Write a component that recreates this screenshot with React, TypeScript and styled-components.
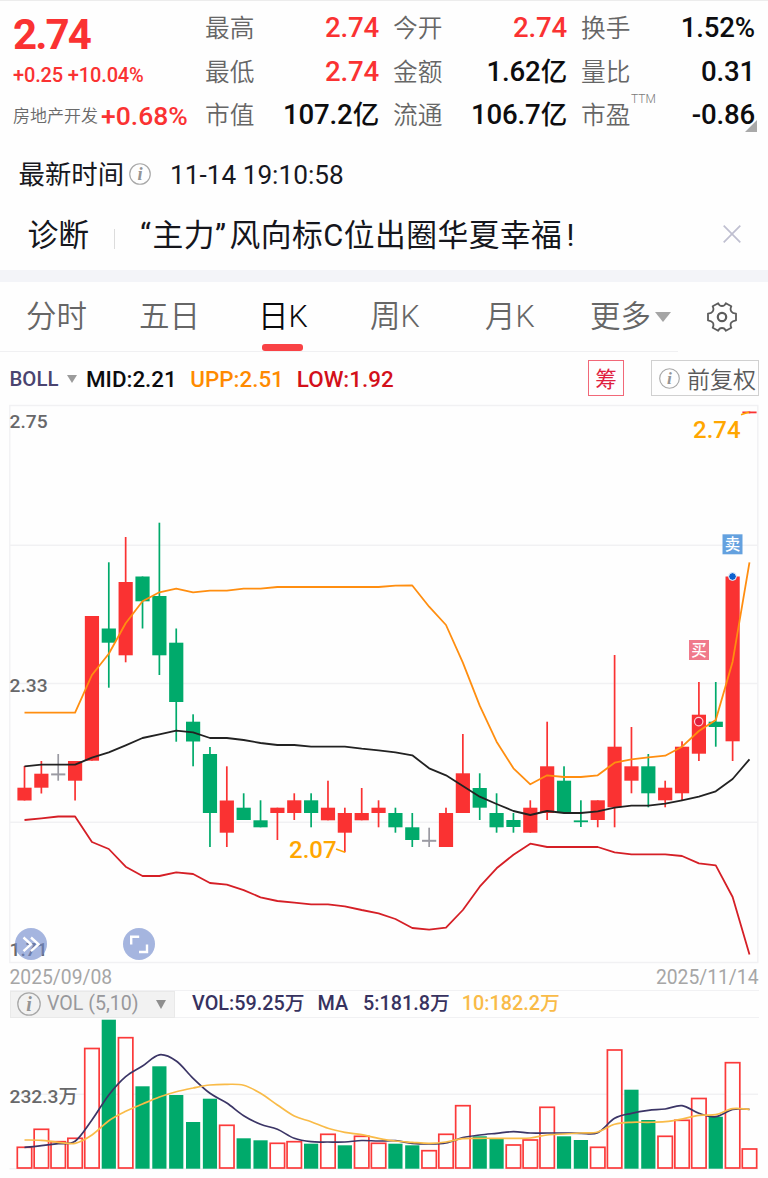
import React from "react";
import styled, { createGlobalStyle } from "styled-components";

const GlobalStyle = createGlobalStyle`
  * { box-sizing: border-box; }
  body {
    margin: 0;
    background: #fefefe;
    font-family: Roboto, "Noto Sans CJK SC", sans-serif;
    color: #17181c;
  }
`;

const RED = "#fa3232";
const GREEN = "#00aa6b";

const Page = styled.main`
  width: 768px;
  height: 1178px;
  overflow: hidden;
  display: flex;
  flex-direction: column;
  border-top: 1px solid #ececec;
`;

/* ---------- quote summary ---------- */

const Summary = styled.header`
  position: relative;
  height: 149px;
  padding: 5px 13px 0;
  display: grid;
  grid-template-columns: 178px 174px 174px 174px;
  column-gap: 14px;
`;

const PriceColumn = styled.div`
  display: flex;
  flex-direction: column;
  color: ${RED};
  white-space: nowrap;
`;

const LastPrice = styled.div`
  height: 56px;
  line-height: 57px;
  font-size: 42px;
  font-weight: 700;
  letter-spacing: -1.9px;
`;

const Change = styled.div`
  height: 26px;
  line-height: 26px;
  font-size: 20px;
  font-weight: 500;
  letter-spacing: -0.15px;
`;

const Sector = styled.div`
  height: 56px;
  display: flex;
  align-items: center;
  gap: 3px;
  line-height: 56px;
`;

const SectorName = styled.span`
  font-size: 17px;
  color: #6a6a6a;
  font-weight: 350;
`;

const SectorChange = styled.span`
  font-size: 26.5px;
  font-weight: 500;
`;

const MetricColumn = styled.dl`
  margin: 0;
  display: grid;
  grid-template-rows: 43px 44px 42px;
`;

const Metric = styled.div`
  display: flex;
  justify-content: space-between;
  align-items: center;
`;

const MetricName = styled.dt`
  position: relative;
  padding-top: 3px;
  font-size: 24.7px;
  line-height: 40px;
  font-weight: 350;
  color: #666;
`;

const Sup = styled.sup`
  position: absolute;
  left: 50px;
  top: -14px;
  font-size: 12px;
  line-height: 40px;
  color: #7a7a7a;
`;

const MetricValue = styled.dd<{ $up?: boolean }>`
  margin: 0;
  padding-top: 1px;
  font-size: 27.6px;
  line-height: 40px;
  font-weight: 500;
  white-space: nowrap;
  letter-spacing: -0.15px;
  color: ${(p) => (p.$up ? RED : "#0d0d0f")};
`;

const Unit = styled.span`
  font-size: 26.5px;
`;

const Corner = styled.i`
  position: absolute;
  left: 745px;
  top: 119px;
  border-bottom: 12px solid #a9a9a9;
  border-left: 12px solid transparent;
`;

const TimeRow = styled.div`
  height: 50px;
  padding-left: 18.5px;
  display: flex;
  align-items: center;
  font-size: 26.4px;
  line-height: 50px;
  color: #17181f;
`;

const InfoIcon = styled.svg<{ $size: number }>`
  width: ${(p) => p.$size}px;
  height: ${(p) => p.$size}px;
  flex: none;
  overflow: visible;
  text {
    font: italic 700 20px "Liberation Serif", serif;
  }
`;

const TimeInfo = styled.span`
  display: flex;
  margin: -3px 19px 0 5px;
`;

const TimeValue = styled.span`
  font-size: 26.2px;
`;

/* ---------- diagnosis strip ---------- */

const Diagnosis = styled.section`
  height: 70px;
  padding: 0 27px 0 27.5px;
  display: flex;
  align-items: center;
  font-size: 30.8px;
  line-height: 71px;
  color: #15161c;
`;

const Divider = styled.i`
  width: 1px;
  height: 20px;
  margin: 8px 25px 0 25px;
  background: #dcdcdc;
`;

const Headline = styled.span`
  flex: 1;
  white-space: nowrap;
  letter-spacing: 0.45px;
`;

const Emphasis = styled.q`
  quotes: "“" "”";
  margin-right: 3px;
  &::before {
    margin-right: 1px;
  }
`;

const Exclaim = styled.span`
  margin-left: 4px;
`;

const CloseIcon = styled.svg`
  width: 18px;
  height: 18px;
  margin-top: -3px;
`;

const Band = styled.div`
  height: 12px;
  background: #f3f4f8;
`;

/* ---------- period tabs ---------- */

const Tabs = styled.nav`
  height: 69px;
  padding-left: 26px;
  display: grid;
  grid-template-columns: 113px 119px 112px 115px 105px 117px 1fr;
  align-items: stretch;
`;

const Tab = styled.div<{ $active?: boolean }>`
  position: relative;
  display: flex;
  align-items: center;
  gap: 4px;
  font-size: 30.5px;
  line-height: 67px;
  font-weight: 350;
  color: ${(p) => (p.$active ? "#08090c" : "#666")};
  ${(p) =>
    p.$active &&
    `&::after {
      content: "";
      position: absolute;
      left: 4px;
      bottom: 0;
      width: 41px;
      height: 7px;
      border-radius: 3px;
      background: #f94245;
    }`}
`;

const Caret = styled.i<{ $w: number; $h: number; $c?: string }>`
  border-top: ${(p) => p.$h}px solid ${(p) => p.$c || "#a5a5a5"};
  border-left: ${(p) => p.$w / 2}px solid transparent;
  border-right: ${(p) => p.$w / 2}px solid transparent;
`;

const GearIcon = styled.svg`
  width: 30px;
  height: 30px;
`;

/* ---------- indicator row ---------- */

const Indicators = styled.div`
  height: 54px;
  padding: 1px 9px 0 9.5px;
  display: flex;
  align-items: center;
  font-size: 22.4px;
  line-height: 54px;
  font-weight: 500;
  background: linear-gradient(#f0f0f2, #f0f0f2) 0 0 / 678px 1px no-repeat;
`;

const Boll = styled.span`
  font-size: 20.4px;
  font-weight: 500;
  color: #4a4470;
  margin-right: 8.5px;
`;

const Reading = styled.span<{ $c: string; $ml: number }>`
  color: ${(p) => p.$c};
  margin-left: ${(p) => p.$ml}px;
`;

const ChipButton = styled.button`
  width: 36px;
  height: 36px;
  margin: -1px 0 0 auto;
  padding: 0;
  border: 1px solid #f16878;
  background: transparent;
  color: #e0213f;
  font: 400 21.5px/34px "Noto Sans CJK SC", sans-serif;
`;

const AdjustButton = styled.button`
  width: 108px;
  height: 36px;
  margin: -1px 0 0 27px;
  padding: 0 0 0 7px;
  display: flex;
  align-items: center;
  gap: 7px;
  border: 1px solid #d0d0d0;
  background: transparent;
  color: #5a5a5a;
  white-space: nowrap;
  font: 350 23px/34px "Noto Sans CJK SC", sans-serif;
`;

/* ---------- charts ---------- */

const PriceChart = styled.section`
  position: relative;
  height: 558px;
`;

const Plot = styled.svg`
  display: block;
  width: 768px;
  height: 100%;
  overflow: visible;
`;

const Axis = styled.text`
  font-size: 19.2px;
  font-weight: 500;
  fill: #68686a;
`;

const Callout = styled.text`
  font-size: 24px;
  font-weight: 500;
  fill: #ffa600;
`;

const Marker = styled.text`
  font: 500 15.5px "Noto Sans CJK SC", sans-serif;
  fill: #fff;
  text-anchor: middle;
`;

const RoundButton = styled.button<{ $x: number }>`
  position: absolute;
  left: ${(p) => p.$x}px;
  top: 523px;
  width: 32px;
  height: 32px;
  padding: 0;
  border: 0;
  border-radius: 50%;
  background: rgba(110, 136, 204, 0.62);
  svg {
    display: block;
    width: 32px;
    height: 32px;
  }
`;

const Dates = styled.div`
  height: 27px;
  padding: 1px 9.5px 0;
  display: flex;
  justify-content: space-between;
  font-size: 19.3px;
  line-height: 27px;
  color: #a6a6a6;
`;

const VolumeBar = styled.div`
  height: 28px;
  margin: 0 9.5px;
  display: flex;
  align-items: center;
  border-top: 1px solid #f1f1f3;
  border-bottom: 1px solid #f1f1f3;
  font-size: 19.8px;
  line-height: 26px;
  font-weight: 500;
  color: #37325f;
  white-space: nowrap;
`;

const VolumeSelect = styled.div`
  width: 165.5px;
  height: 27px;
  padding: 0 8px 0 6.5px;
  display: flex;
  align-items: center;
  gap: 6px;
  background: #f2f2f2;
  border: 1px solid #e9e9e9;
  font-size: 19.6px;
  font-weight: 400;
  color: #98989c;
  ${Caret} {
    margin-left: auto;
  }
`;

const VolumeChart = styled.section`
  height: 160px;
`;

/* ---------- data ---------- */

const barX = (i: number) => 24.5 + i * 16.86;

type Kind = "r" | "g" | "n";
/* kind, body top, body bottom, high, low */
const candles: [Kind, number, number, number, number][] = [
  ["r", 787.7, 800.5, 766, 800.5],
  ["r", 773.7, 787.7, 761, 793.5],
  ["n", 773.4, 775.4, 754, 780.7],
  ["r", 761, 780.7, 761, 800.5],
  ["r", 616, 760.7, 616, 760.7],
  ["g", 628.5, 642.7, 562.3, 687.7],
  ["r", 582, 655.3, 537, 662.3],
  ["g", 576.5, 601.3, 576.5, 628.5],
  ["g", 596, 655.3, 522.7, 675],
  ["g", 642.7, 702, 628.5, 741.7],
  ["g", 721.7, 741.5, 714.3, 766.3],
  ["g", 754, 813, 747, 847],
  ["r", 800.5, 832.7, 766.3, 847],
  ["g", 807.7, 820, 793.3, 820],
  ["g", 820.3, 827.3, 800.3, 827.3],
  ["r", 807.7, 813, 807.7, 840],
  ["r", 800.3, 813, 793.3, 820],
  ["g", 800.3, 813, 793.3, 827.3],
  ["r", 807.7, 820.3, 780.7, 820.3],
  ["r", 813, 832.7, 807.7, 852.3],
  ["r", 813, 820.3, 788, 820.3],
  ["r", 807.7, 813, 800.3, 827.3],
  ["g", 813, 827.3, 807.7, 832.7],
  ["g", 827.3, 840, 813, 847],
  ["n", 839.8, 841.8, 827.7, 847],
  ["r", 813, 847, 807.7, 847],
  ["r", 773.3, 813, 734, 813],
  ["g", 788, 807.7, 773.3, 820],
  ["g", 813, 827.3, 793.3, 832.7],
  ["g", 820, 827, 813, 832.7],
  ["r", 807.7, 832.7, 800.3, 832.7],
  ["r", 766.3, 813, 721.7, 820],
  ["g", 780.7, 813, 766.3, 813],
  ["g", 820.4, 822.2, 800.3, 827],
  ["r", 800.3, 820, 800.3, 827.3],
  ["r", 746.7, 807.3, 655, 827.3],
  ["r", 766.3, 780.7, 727, 793.3],
  ["g", 766.3, 793.3, 754, 807.3],
  ["r", 787.7, 800.3, 780.7, 807.3],
  ["r", 746.7, 793.3, 741.3, 800.3],
  ["r", 714.7, 753.7, 682, 761],
  ["g", 721.7, 727, 682, 746.7],
  ["r", 576.5, 741.3, 576.5, 761],
  ["r", 411.5, 413.3, 411.5, 413.3],
];

const upper = [
  712.7, 712.7, 712.7, 712.7, 675, 653.7, 623.3, 601.3, 592.3, 588.7, 592.3, 590.7, 590.7, 588.7,
  588.7, 587, 587, 587, 587, 587, 587, 587, 585.7, 585.5, 606.7, 625, 662.7, 705.7, 741.7, 768.3,
  784.3, 775.3, 777, 777, 775.3, 762.7, 759.3, 757.3, 755.7, 746.7, 731, 720, 661.7, 562.3,
];
const middle = [
  766.3, 764.7, 764.7, 764.7, 757.7, 752.3, 745.3, 738, 734.3, 730.7, 732.3, 738, 738, 740, 743,
  745, 745, 746.7, 746.7, 746.7, 748.7, 750.3, 752.3, 755.3, 768.3, 775.3, 786, 796.7, 804, 811,
  815, 811, 813, 813, 811.3, 807.7, 805.7, 805.7, 803.7, 800.3, 796.7, 791.3, 779, 759.3,
];
const lower = [
  820, 818.3, 816.5, 816.5, 842, 849, 866.7, 876, 876, 872.3, 874, 883, 884.7, 890.2, 897.3, 901,
  902.7, 904.3, 904.3, 906.3, 910, 913.3, 919, 928, 929.7, 927.7, 910, 886.7, 868.3, 854.7, 843.7,
  847, 847, 847, 847, 852.3, 854.3, 854.3, 854.3, 856, 863.3, 865.3, 897, 954.5,
];

const volumes: [Kind, number][] = [
  ["r", 1147.3], ["r", 1129.3], ["r", 1141.7], ["r", 1138.3], ["r", 1048.5], ["g", 1019.7],
  ["r", 1037.7], ["g", 1086.3], ["g", 1066.3], ["g", 1095], ["g", 1122], ["g", 1098.7],
  ["r", 1125.3], ["g", 1138.3], ["g", 1140.3], ["r", 1143.3], ["r", 1141.7], ["g", 1143.7],
  ["r", 1134.3], ["g", 1145.3], ["r", 1136.3], ["r", 1143.3], ["g", 1143.7], ["g", 1145.3],
  ["r", 1150.7], ["r", 1134.3], ["r", 1105.7], ["g", 1136.3], ["g", 1138.3], ["r", 1145],
  ["r", 1140], ["r", 1107.3], ["g", 1136.3], ["g", 1140], ["r", 1147.3], ["r", 1050],
  ["g", 1089.7], ["g", 1120], ["r", 1136.3], ["r", 1120.3], ["r", 1098.5], ["g", 1116.7],
  ["r", 1062.7], ["r", 1149],
];

const ma5 = [
  1147.3, 1145.7, 1143.7, 1141.3, 1120, 1095, 1076.7, 1066, 1054.8, 1061, 1078.3, 1093.3, 1103,
  1115.7, 1124.3, 1129.3, 1138.3, 1141.7, 1142, 1142, 1140.5, 1141, 1140.7, 1143.3, 1144, 1143,
  1137.7, 1135, 1133.3, 1131.7, 1133, 1133, 1133, 1133.3, 1132.7, 1118.3, 1113.3, 1110.3, 1109,
  1105.7, 1113.3, 1116.7, 1109.3, 1109.3,
];
const ma10 = [
  1140, 1140.3, 1142.3, 1143.3, 1135, 1120.7, 1111.3, 1104, 1097, 1091.7, 1088, 1085, 1084.3,
  1085.3, 1093.3, 1105, 1116, 1121.7, 1128.3, 1132.3, 1134.7, 1138.3, 1141, 1142.3, 1143.3, 1142,
  1138.7, 1138.3, 1138.3, 1138.3, 1138, 1135, 1134, 1133, 1132, 1124.3, 1122.3, 1122.3, 1121.7,
  1119, 1115.3, 1114.7, 1108.7, 1109.3,
];

const polyline = (ys: number[]) => ys.map((y, i) => `${barX(i)},${y}`).join(" ");

const smooth = (ys: number[]) => {
  const at = (i: number) => ys[Math.max(0, Math.min(ys.length - 1, i))];
  let d = `M${barX(0)},${ys[0]}`;
  for (let i = 0; i < ys.length - 1; i++) {
    const c1 = at(i) + (at(i + 1) - at(i - 1)) / 6;
    const c2 = at(i + 1) - (at(i + 2) - at(i)) / 6;
    d += `C${barX(i) + 5.62},${c1} ${barX(i + 1) - 5.62},${c2} ${barX(i + 1)},${at(i + 1)}`;
  }
  return d;
};

const colorOf = (k: Kind) => (k === "r" ? RED : k === "g" ? GREEN : "#9a9aa2");

const metrics: { name: string; value: string; unit?: string; up?: boolean; sup?: string }[][] = [
  [
    { name: "最高", value: "2.74", up: true },
    { name: "最低", value: "2.74", up: true },
    { name: "市值", value: "107.2", unit: "亿" },
  ],
  [
    { name: "今开", value: "2.74", up: true },
    { name: "金额", value: "1.62", unit: "亿" },
    { name: "流通", value: "106.7", unit: "亿" },
  ],
  [
    { name: "换手", value: "1.52%" },
    { name: "量比", value: "0.31" },
    { name: "市盈", value: "-0.86", sup: "TTM" },
  ],
];

const Info = ({ size, color = "#a8a8a8" }: { size: number; color?: string }) => (
  <InfoIcon $size={size} viewBox="0 0 24 24">
    <circle cx="12" cy="12" r="11.2" fill="none" stroke={color} strokeWidth="1.3" />
    <text x="12" y="18.5" textAnchor="middle" fill="#949494">
      i
    </text>
  </InfoIcon>
);

export default function App() {
  return (
    <>
      <GlobalStyle />
      <Page>
        <Summary>
          <PriceColumn>
            <LastPrice>2.74</LastPrice>
            <Change>+0.25 +10.04%</Change>
            <Sector>
              <SectorName>房地产开发</SectorName>
              <SectorChange>+0.68%</SectorChange>
            </Sector>
          </PriceColumn>
          {metrics.map((column, c) => (
            <MetricColumn key={c}>
              {column.map((m) => (
                <Metric key={m.name}>
                  <MetricName>
                    {m.name}
                    {m.sup && <Sup>{m.sup}</Sup>}
                  </MetricName>
                  <MetricValue $up={m.up}>
                    {m.value}
                    {m.unit && <Unit>{m.unit}</Unit>}
                  </MetricValue>
                </Metric>
              ))}
            </MetricColumn>
          ))}
          <Corner />
        </Summary>

        <TimeRow>
          最新时间
          <TimeInfo>
            <Info size={22} />
          </TimeInfo>
          <TimeValue>11-14 19:10:58</TimeValue>
        </TimeRow>

        <Diagnosis>
          诊断
          <Divider />
          <Headline>
            <Emphasis>主力</Emphasis>风向标C位出圈华夏幸福<Exclaim>!</Exclaim>
          </Headline>
          <CloseIcon viewBox="0 0 18 18">
            <path d="M0.7 0.7L17.3 17.3M17.3 0.7L0.7 17.3" stroke="#bfbfd0" strokeWidth="1.7" />
          </CloseIcon>
        </Diagnosis>
        <Band />

        <Tabs>
          <Tab>分时</Tab>
          <Tab>五日</Tab>
          <Tab $active>日K</Tab>
          <Tab>周K</Tab>
          <Tab>月K</Tab>
          <Tab>
            更多
            <Caret $w={17} $h={10} />
          </Tab>
          <Tab>
            <GearIcon viewBox="0 0 30 30" fill="none" stroke="#5c5c5c" strokeWidth="1.8">
              <path
                strokeLinejoin="round"
                d="M11.2 1.2C12 3.3 13.5 4 15 4s3-.7 3.8-2.8L24.3 4.3C23.2 6.5 23.4 8.1 24.3 9.4S26.8 11.3 29 11.6V18.4C26.8 18.7 25.2 19.3 24.3 20.6S23.2 23.5 24.3 25.7L18.8 28.8C18 26.7 16.5 26 15 26s-3 .7-3.8 2.8L5.7 25.7C6.8 23.5 6.6 21.9 5.7 20.6S3.2 18.7 1 18.4V11.6C3.2 11.3 4.8 10.7 5.7 9.4S6.8 6.5 5.7 4.3Z"
              />
              <circle cx="15" cy="15" r="4.2" strokeWidth="2.2" />
            </GearIcon>
          </Tab>
        </Tabs>

        <Indicators>
          <Boll>BOLL</Boll>
          <Caret $w={10} $h={8} $c="#9b9b9b" />
          <Reading $c="#0c0c0e" $ml={9}>MID:2.21</Reading>
          <Reading $c="#ff8a00" $ml={13.5}>UPP:2.51</Reading>
          <Reading $c="#d3101a" $ml={13}>LOW:1.92</Reading>
          <ChipButton>筹</ChipButton>
          <AdjustButton>
            <Info size={21} />
            前复权
          </AdjustButton>
        </Indicators>

        <PriceChart>
          <Plot viewBox="0 405 768 558">
            <g fill="none" stroke="#f1f1f3" strokeWidth="1.4">
              <rect x="9.8" y="405.5" width="748" height="557" />
              <path d="M10 545.3H758M10 683.5H758M10 822.2H758" />
            </g>
            <Axis x="9.5" y="427.7">2.75</Axis>
            <Axis x="9.5" y="692">2.33</Axis>
            <Axis x="9.5" y="956">1.71</Axis>
            {candles.map(([k, top, bottom, high, low], i) => (
              <g key={i} fill={colorOf(k)}>
                <rect x={barX(i) - 0.85} y={high} width="1.7" height={low - high} />
                <rect x={barX(i) - 7.1} y={top} width="14.2" height={bottom - top} />
              </g>
            ))}
            <g fill="none" strokeWidth="1.8" strokeLinejoin="round">
              <polyline points={polyline(upper)} stroke="#ff8e10" />
              <polyline points={polyline(middle)} stroke="#222" />
              <polyline points={polyline(lower)} stroke="#d51f26" />
            </g>
            <path d="M741 414.8L749 412M336 849L345 852.3" stroke="#ffa600" strokeWidth="1.6" />
            <Callout x="693" y="438">2.74</Callout>
            <Callout x="289" y="857.5">2.07</Callout>
            <rect x="722.5" y="534.3" width="20" height="20" fill="#64a1df" />
            <Marker x="732.5" y="550">卖</Marker>
            <rect x="689" y="640" width="20" height="20" fill="#f07a8b" />
            <Marker x="699" y="655.7">买</Marker>
            <circle cx="732.5" cy="576.5" r="3.9" fill="#0c62cf" stroke="#fff" strokeWidth="1" />
            <circle cx="698.7" cy="721.6" r="4.2" fill="#e01f3d" stroke="#ffd0d6" strokeWidth="1.2" />
          </Plot>
          <RoundButton $x={15}>
            <svg viewBox="0 0 32 32" fill="none" stroke="#fff" strokeWidth="2.4">
              <path d="M8.5 9.5L16 16.3L8.5 23.2M16 9.5L23.5 16.3L16 23.2" />
            </svg>
          </RoundButton>
          <RoundButton $x={123.3}>
            <svg viewBox="0 0 32 32" fill="none" stroke="#fff" strokeWidth="2.4">
              <path d="M8.2 16.5V8.7H16.2M24 16.5V24H16" />
            </svg>
          </RoundButton>
        </PriceChart>

        <Dates>
          <span>2025/09/08</span>
          <span>2025/11/14</span>
        </Dates>

        <VolumeBar>
          <VolumeSelect>
            <Info size={24} />
            VOL (5,10)
            <Caret $w={11} $h={9} $c="#8e8e8e" />
          </VolumeSelect>
          <Reading $c="#37325f" $ml={17}>VOL:59.25万</Reading>
          <Reading $c="#37325f" $ml={13}>MA</Reading>
          <Reading $c="#37325f" $ml={15}>5:181.8万</Reading>
          <Reading $c="#f9bb48" $ml={12}>10:182.2万</Reading>
        </VolumeBar>

        <VolumeChart>
          <Plot viewBox="0 1018 768 160">
            <path d="M10 1094.3H758M9.5 1168.7H758" stroke="#f1f1f3" strokeWidth="1.4" />
            <Axis x="9.5" y="1103">232.3万</Axis>
            {volumes.map(([k, top], i) =>
              k === "r" ? (
                <rect
                  key={i}
                  x={barX(i) - 7.2}
                  y={top}
                  width="14.4"
                  height={1168 - top}
                  fill="#fefefe"
                  stroke="#fb3a3a"
                  strokeWidth="1.7"
                />
              ) : (
                <rect key={i} x={barX(i) - 7.1} y={top} width="14.2" height={1168.7 - top} fill={GREEN} />
              )
            )}
            <path d={smooth(ma5)} fill="none" stroke="#3b3566" strokeWidth="1.7" />
            <path d={smooth(ma10)} fill="none" stroke="#f9bb48" strokeWidth="1.7" />
          </Plot>
        </VolumeChart>
      </Page>
    </>
  );
}
